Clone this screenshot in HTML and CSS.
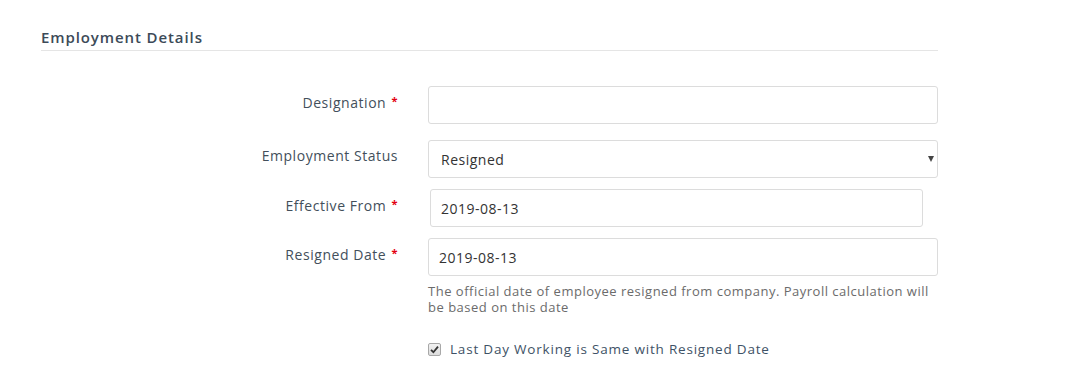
FILE: index.html
```html
<!DOCTYPE html>
<html lang="en">
<head>
    <meta charset="UTF-8">
    <meta name="viewport" content="width=device-width, initial-scale=1.0">
    <title>Employment Details</title>
    <link rel="stylesheet" href="styles.css">
</head>
<body>
    <div class="section">
        <h4 class="section-title">Employment Details</h4>

        <form class="form">
            <div class="form-row">
                <label class="form-label">Designation <span class="req">*</span></label>
                <div class="form-field">
                    <input type="text" class="form-input">
                </div>
            </div>

            <div class="form-row status-row">
                <label class="form-label">Employment Status</label>
                <div class="form-field">
                    <div class="select-wrap">
                        <select class="form-input">
                            <option>Resigned</option>
                        </select>
                    </div>
                </div>
            </div>

            <div class="form-row">
                <label class="form-label">Effective From <span class="req">*</span></label>
                <div class="form-field narrow">
                    <input type="text" class="form-input" value="2019-08-13">
                </div>
            </div>

            <div class="form-row">
                <label class="form-label">Resigned Date <span class="req">*</span></label>
                <div class="form-field">
                    <input type="text" class="form-input" value="2019-08-13">
                    <p class="help-text">The official date of employee resigned from company. Payroll calculation will be based on this date</p>
                </div>
            </div>

            <div class="form-row">
                <div></div>
                <div class="form-field">
                    <label class="check">
                        <span class="check-box">
                            <svg width="9" height="9" viewBox="0 0 9 9"><path d="M1 4.8 L3.4 7.2 L8 1.6" fill="none" stroke="#333" stroke-width="1.8"/></svg>
                        </span>
                        <span>Last Day Working is Same with Resigned Date</span>
                    </label>
                </div>
            </div>
        </form>
    </div>
</body>
</html>
```

FILE: styles.css
```css
body {
    margin: 0;
    background: #fff;
    font-family: "Open Sans", sans-serif;
    color: #434f5b;
}

.section {
    width: 897px;
    margin-left: 41px;
    padding-top: 29px;
}

.section-title {
    margin: 0;
    padding-bottom: 4px;
    font-size: 15px;
    font-weight: 600;
    letter-spacing: 0.9px;
    line-height: 17px;
    color: #3c4a58;
    border-bottom: 1px solid #e5e5e5;
}

.form {
    padding-top: 35px;
}

.form-row {
    display: grid;
    grid-template-columns: 357px 1fr;
    column-gap: 30px;
    margin-bottom: 11px;
}

.form-row:first-child {
    margin-bottom: 16px;
}

.form-label {
    text-align: right;
    font-size: 14px;
    letter-spacing: 0.55px;
    line-height: 20px;
    padding-top: 5px;
    color: #434f5b;
}

.status-row .form-label {
    padding-top: 6px;
}

.req {
    color: #e3000f;
    font-size: 11px;
    font-weight: 700;
    vertical-align: 3px;
    margin-left: 1px;
}

.form-field.narrow {
    padding-left: 2px;
    padding-right: 15px;
}

.form-input {
    display: block;
    width: 100%;
    height: 38px;
    box-sizing: border-box;
    border: 1px solid #dcdcdc;
    border-radius: 3px;
    padding: 0 10px;
    font-family: inherit;
    font-size: 14px;
    letter-spacing: 0.5px;
    color: #333;
    background: #fff;
}

.select-wrap {
    position: relative;
}

.select-wrap select {
    appearance: none;
    -webkit-appearance: none;
    padding-left: 12px;
}

.select-wrap::after {
    content: "";
    position: absolute;
    right: 4px;
    top: 16px;
    border-left: 3.5px solid transparent;
    border-right: 3.5px solid transparent;
    border-top: 6px solid #444;
    pointer-events: none;
}

.help-text {
    margin: 7px 0 0;
    font-size: 13px;
    line-height: 16px;
    letter-spacing: 0.5px;
    color: #6b6b6b;
}

.check {
    display: flex;
    align-items: center;
    margin-top: 14px;
    font-size: 13.5px;
    letter-spacing: 0.8px;
    color: #3e5266;
}

.check-box {
    display: flex;
    align-items: center;
    justify-content: center;
    width: 11px;
    height: 11px;
    margin-right: 9px;
    border: 1px solid #a8a8a8;
    border-radius: 2px;
    background: linear-gradient(#f2f2f2, #dcdcdc);
}
```
